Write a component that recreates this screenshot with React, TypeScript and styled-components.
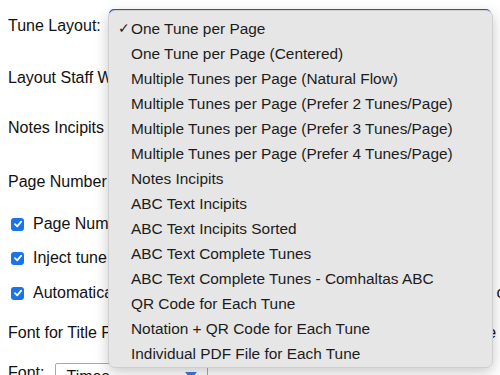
import styled, { createGlobalStyle } from "styled-components";

const GlobalStyle = createGlobalStyle`
  body {
    margin: 0;
    background: #ffffff;
    font-family: "Liberation Sans", Arial, sans-serif;
    color: #111111;
    overflow: hidden;
  }
`;

const Page = styled.div`
  position: relative;
  width: 500px;
  height: 375px;
  overflow: hidden;
  padding: 9px 0 0 8px;
  box-sizing: border-box;
`;

const Row = styled.div<{ $h: number; $gap: number }>`
  display: flex;
  align-items: center;
  height: ${(p) => p.$h}px;
  margin-bottom: ${(p) => p.$gap}px;
  font-size: 16px;
  white-space: nowrap;
`;

const Label = styled.span`
  margin-right: 8px;
`;

const FocusedSelect = styled.div`
  width: 378px;
  height: 29px;
  border: 2px solid #1d5fd0;
  border-radius: 5px;
  background: #ffffff;
`;

const CheckRow = styled(Row)`
  padding-left: 3px;
`;

const Check = styled.span`
  display: inline-flex;
  align-items: center;
  justify-content: center;
  flex: none;
  width: 13px;
  height: 13px;
  border-radius: 3px;
  background: #1a73e8;
  margin-right: 9px;
`;

const FontSelect = styled.div`
  display: flex;
  align-items: flex-start;
  justify-content: space-between;
  width: 153px;
  height: 26px;
  margin-left: 11px;
  margin-top: 6px;
  border: 1px solid #a8a8a8;
  border-radius: 2px;
  padding: 4px 10px 0 10px;
  box-sizing: border-box;
`;

const Arrow = styled.span`
  margin-top: 4px;
  width: 0;
  height: 0;
  border-left: 6px solid transparent;
  border-right: 6px solid transparent;
  border-top: 7px solid #3b78e7;
`;

const Menu = styled.ul`
  position: absolute;
  left: 108px;
  top: 10px;
  width: 385px;
  height: 358px;
  box-sizing: border-box;
  margin: 0;
  padding: 5px 0 0 0;
  list-style: none;
  background: #e6e6e6;
  border: 1px solid #cfcfcf;
  border-radius: 7px;
  box-shadow: 0 4px 14px rgba(0, 0, 0, 0.22);
`;

const Item = styled.li`
  position: relative;
  height: 25px;
  line-height: 25px;
  padding-left: 22px;
  font-size: 15.4px;
  color: #1c1c1c;
  white-space: nowrap;
`;

const Tick = styled.span`
  position: absolute;
  left: 9px;
  top: 0;
  font-size: 14px;
`;

const options = [
  "One Tune per Page",
  "One Tune per Page (Centered)",
  "Multiple Tunes per Page (Natural Flow)",
  "Multiple Tunes per Page (Prefer 2 Tunes/Page)",
  "Multiple Tunes per Page (Prefer 3 Tunes/Page)",
  "Multiple Tunes per Page (Prefer 4 Tunes/Page)",
  "Notes Incipits",
  "ABC Text Incipits",
  "ABC Text Incipits Sorted",
  "ABC Text Complete Tunes",
  "ABC Text Complete Tunes - Comhaltas ABC",
  "QR Code for Each Tune",
  "Notation + QR Code for Each Tune",
  "Individual PDF File for Each Tune",
];

function CheckIcon() {
  return (
    <svg width="10" height="10" viewBox="0 0 10 10">
      <path d="M2 5.2 L4.2 7.4 L8.2 2.6" stroke="#fff" strokeWidth="1.8" fill="none" strokeLinecap="round" strokeLinejoin="round" />
    </svg>
  );
}

export default function App() {
  return (
    <Page>
      <GlobalStyle />
      <Row $h={33} $gap={25}>
        <Label>Tune Layout:</Label>
        <FocusedSelect />
      </Row>
      <Row $h={22} $gap={28}>
        <Label>Layout Staff Width (default is 556):</Label>
      </Row>
      <Row $h={22} $gap={32}>
        <Label>Notes Incipits Length (in measures):</Label>
      </Row>
      <Row $h={22} $gap={20}>
        <Label>Page Number Location and Font Size:</Label>
      </Row>
      <CheckRow $h={22} $gap={12}>
        <Check><CheckIcon /></Check>
        <span>Page Numbers on the First Page</span>
      </CheckRow>
      <CheckRow $h={22} $gap={13}>
        <Check><CheckIcon /></Check>
        <span>Inject tune numbering into the ABC</span>
      </CheckRow>
      <CheckRow $h={22} $gap={18}>
        <Check><CheckIcon /></Check>
        <span>Automatically add a table of contents with page numbers and the cover page</span>
      </CheckRow>
      <Row $h={22} $gap={18}>
        <Label>Font for Title Page, Table of Contents, Index, Page Header and Page Footer</Label>
      </Row>
      <Row $h={22} $gap={0}>
        <span>Font:</span>
        <FontSelect>
          <span>Times</span>
          <Arrow />
        </FontSelect>
      </Row>
      <Menu>
        {options.map((o, i) => (
          <Item key={o}>
            {i === 0 && <Tick>✓</Tick>}
            {o}
          </Item>
        ))}
      </Menu>
    </Page>
  );
}
